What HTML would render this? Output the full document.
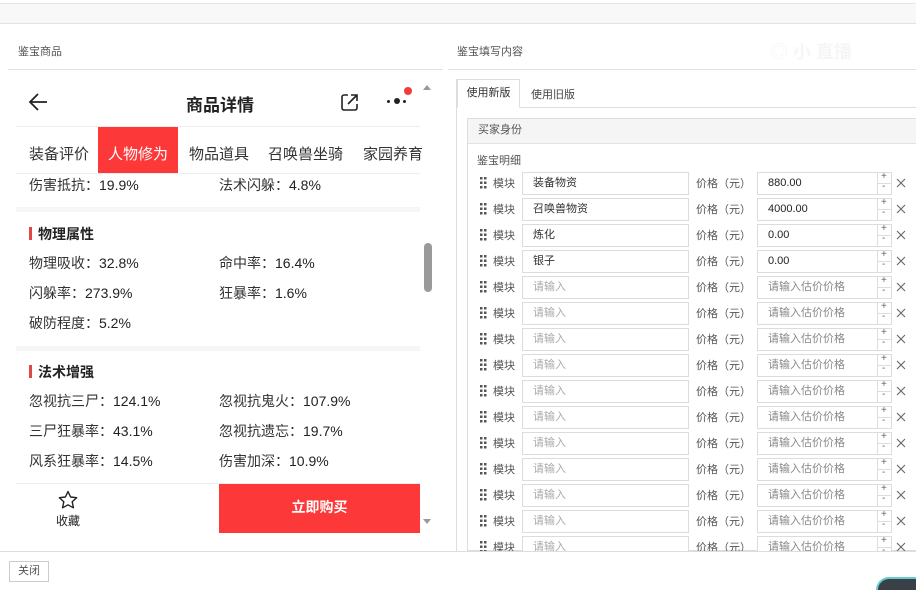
<!DOCTYPE html>
<html><head><meta charset="utf-8"><style>
*{box-sizing:border-box;margin:0;padding:0}
html,body{width:916px;height:590px;overflow:hidden}
body{background:#fff;font-family:"Liberation Sans","Noto Sans CJK SC",sans-serif;position:relative;color:#333}
.a{position:absolute;white-space:nowrap}
.s{font-size:11px;color:#555}
.ph{font-size:14px;color:#333}
.ph b{color:#222;font-weight:normal}
.sec{font-size:14px;font-weight:bold;color:#222;padding-left:9px}
.sec:before{content:"";position:absolute;left:0;top:3px;width:3px;height:13px;background:#e04848}
.sep{position:absolute;left:16px;width:404px;height:5px;background:#f6f6f6}
.inp{position:absolute;height:23px;border:1px solid #dcdcdc;font-size:11px;line-height:21px;padding-left:10px;color:#333;background:#fff}
.ph2{color:#aaa}
</style></head><body>
<div class="a" style="left:0;top:3px;width:916px;height:21px;background:#f8f8f8;border-top:1px solid #e6e6e6;border-bottom:1px solid #e2e2e2"></div>
<div class="a s" style="left:18px;top:43px">鉴宝商品</div>
<div class="a" style="left:8px;top:69px;width:435px;height:1px;background:#e0e0e0"></div>
<div class="a s" style="left:457px;top:43px">鉴宝填写内容</div>
<div class="a" style="left:448px;top:69px;width:468px;height:1px;background:#e0e0e0"></div>
<div class="a" style="left:770px;top:38px;font-size:18px;color:#f6f6f6;font-weight:bold">◎ 小 直播</div>

<!-- phone -->
<svg class="a" style="left:28px;top:92px" width="22" height="20" viewBox="0 0 22 20"><path d="M19 10H3M10 2L2 10l8 8" fill="none" stroke="#222" stroke-width="1.8"/></svg>
<div class="a" style="left:186px;top:91px;font-size:17px;font-weight:bold;color:#222">商品详情</div>
<svg class="a" style="left:340px;top:93px" width="19" height="19" viewBox="0 0 19 19"><path d="M8 2H4a2 2 0 0 0-2 2v11a2 2 0 0 0 2 2h11a2 2 0 0 0 2-2v-4M11 2h6v6M17 2L8 11" fill="none" stroke="#222" stroke-width="1.6"/></svg>
<div class="a" style="left:387px;top:100px;width:3px;height:3px;border-radius:2px;background:#222"></div>
<div class="a" style="left:394px;top:98px;width:6px;height:6px;border-radius:3px;background:#222"></div>
<div class="a" style="left:403px;top:100px;width:3px;height:3px;border-radius:2px;background:#222"></div>
<div class="a" style="left:404px;top:87px;width:8px;height:8px;border-radius:4px;background:#f03c3c"></div>
<div class="a" style="left:16px;top:126px;width:404px;height:1px;background:#eee"></div>
<div class="a" style="left:98px;top:127px;width:80px;height:46px;background:#fd3838"></div>
<div class="a ph" style="left:29px;top:143px;font-size:15px">装备评价</div>
<div class="a ph" style="left:108px;top:143px;font-size:15px;color:#fff">人物修为</div>
<div class="a ph" style="left:189px;top:143px;font-size:15px">物品道具</div>
<div class="a ph" style="left:268px;top:143px;font-size:15px">召唤兽坐骑</div>
<div class="a ph" style="left:363px;top:143px;font-size:15px">家园养育</div>
<div class="a" style="left:16px;top:173px;width:404px;height:1px;background:#eee"></div>
<div class="a ph" style="left:29px;top:175px">伤害抵抗：<b>19.9%</b></div>
<div class="a ph" style="left:219px;top:175px">法术闪躲：<b>4.8%</b></div>
<div class="sep" style="top:207px"></div>
<div class="a sec" style="left:29px;top:224px">物理属性</div>
<div class="a ph" style="left:29px;top:253px">物理吸收：<b>32.8%</b></div>
<div class="a ph" style="left:219px;top:253px">命中率：<b>16.4%</b></div>
<div class="a ph" style="left:29px;top:283px">闪躲率：<b>273.9%</b></div>
<div class="a ph" style="left:219px;top:283px">狂暴率：<b>1.6%</b></div>
<div class="a ph" style="left:29px;top:313px">破防程度：<b>5.2%</b></div>
<div class="sep" style="top:346px"></div>
<div class="a sec" style="left:29px;top:362px">法术增强</div>
<div class="a ph" style="left:29px;top:391px">忽视抗三尸：<b>124.1%</b></div>
<div class="a ph" style="left:219px;top:391px">忽视抗鬼火：<b>107.9%</b></div>
<div class="a ph" style="left:29px;top:421px">三尸狂暴率：<b>43.1%</b></div>
<div class="a ph" style="left:219px;top:421px">忽视抗遗忘：<b>19.7%</b></div>
<div class="a ph" style="left:29px;top:451px">风系狂暴率：<b>14.5%</b></div>
<div class="a ph" style="left:219px;top:451px">伤害加深：<b>10.9%</b></div>
<div class="a" style="left:16px;top:483px;width:404px;height:1px;background:#eee"></div>
<svg class="a" style="left:58px;top:490px" width="20" height="20" viewBox="0 0 20 20"><path d="M10 1.5l2.6 5.5 6 .7-4.4 4.1 1.2 6-5.4-3-5.4 3 1.2-6L1.4 7.7l6-.7z" fill="none" stroke="#222" stroke-width="1.4" stroke-linejoin="round"/></svg>
<div class="a" style="left:56px;top:512px;font-size:12px;color:#222">收藏</div>
<div class="a" style="left:219px;top:484px;width:201px;height:49px;background:#fd3838;color:#fff;font-size:14px;font-weight:bold;text-align:center;line-height:47px">立即购买</div>
<div class="a" style="left:423px;top:85px;width:0;height:0;border:4px solid transparent;border-bottom:5px solid #999;border-top:0"></div>
<div class="a" style="left:424px;top:243px;width:8px;height:49px;border-radius:4px;background:#9a9a9a"></div>
<div class="a" style="left:423px;top:519px;width:0;height:0;border:4px solid transparent;border-top:5px solid #999;border-bottom:0"></div>

<!-- right -->
<div class="a" style="left:456px;top:79px;width:1px;height:472px;background:#ddd"></div>
<div class="a" style="left:457px;top:107px;width:459px;height:1px;background:#ddd"></div>
<div class="a" style="left:457px;top:79px;width:63px;height:29px;border:1px solid #ddd;border-bottom:1px solid #fff;background:#fff;font-size:11px;color:#333;text-align:center;line-height:26px">使用新版</div>
<div class="a" style="left:531px;top:86px;font-size:11px;color:#444">使用旧版</div>
<div class="a" style="left:467px;top:118px;width:449px;height:433px;border:1px solid #ddd;border-right:0"></div>
<div class="a" style="left:468px;top:119px;width:448px;height:25px;background:#f5f5f5;border-bottom:1px solid #e2e2e2;font-size:11px;color:#555;padding-left:10px;line-height:22px">买家身份</div>
<div class="a s" style="left:477px;top:152px">鉴宝明细</div>
<div id="rows"></div>
<div class="a" style="left:0;top:551px;width:916px;height:39px;background:#fff;border-top:1px solid #ddd"></div>
<div class="a" style="left:9px;top:561px;width:40px;height:21px;border:1px solid #ccc;font-size:11px;color:#555;text-align:center;line-height:19px">关闭</div>
<div class="a" style="left:876px;top:577px;width:40px;height:13px;border-radius:20px 0 0 0;background:#3a4048;border-top:2px solid #6cc;border-left:2px solid #6cc"></div>
<script>
var v=[["装备物资","880.00"],["召唤兽物资","4000.00"],["炼化","0.00"],["银子","0.00"]];
var h="";
for(var i=0;i<15;i++){
 var y=172+26*i;
 var a=v[i]?v[i][0]:null,b=v[i]?v[i][1]:null;
 h+='<svg class="a" style="left:480px;top:'+(y+5)+'px" width="7" height="12"><g fill="#555"><rect x="0" y="0" width="2.5" height="2.5"/><rect x="4" y="0" width="2.5" height="2.5"/><rect x="0" y="4.5" width="2.5" height="2.5"/><rect x="4" y="4.5" width="2.5" height="2.5"/><rect x="0" y="9" width="2.5" height="2.5"/><rect x="4" y="9" width="2.5" height="2.5"/></g></svg>';
 h+='<div class="a s" style="left:493px;top:'+(y+3)+'px">模块</div>';
 h+='<div class="inp'+(a?'':' ph2')+'" style="left:522px;top:'+y+'px;width:167px">'+(a||'请输入')+'</div>';
 h+='<div class="a s" style="left:696px;top:'+(y+3)+'px">价格（元）</div>';
 h+='<div class="inp'+(b?'':' ph2')+'" style="left:757px;top:'+y+'px;width:135px;color:'+(b?'#222':'#888')+'">'+(b||'请输入估价价格')+'</div>';
 h+='<div class="a" style="left:877px;top:'+(y+1)+'px;width:1px;height:21px;background:#ddd"></div>';
 h+='<div class="a" style="left:881px;top:'+(y-1)+'px;font-size:10px;color:#666">+</div>';
 h+='<div class="a" style="left:878px;top:'+(y+11)+'px;width:14px;height:1px;background:#ddd"></div>';
 h+='<div class="a" style="left:882px;top:'+(y+9)+'px;font-size:10px;color:#666">-</div>';
 h+='<svg class="a" style="left:896px;top:'+(y+6)+'px" width="10" height="10"><path d="M1 1l8 8M9 1l-8 8" stroke="#666" stroke-width="1.1"/></svg>';
}
document.getElementById("rows").innerHTML=h;
</script>
</body></html>
